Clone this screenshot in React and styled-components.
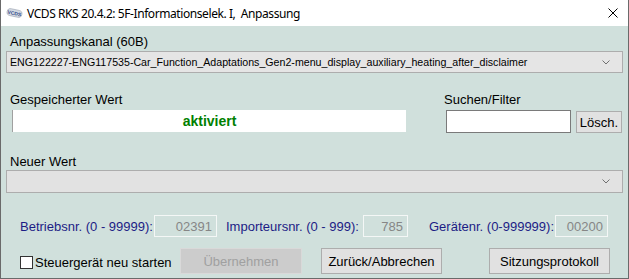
import React from "react";
import styled, { createGlobalStyle } from "styled-components";

const GlobalStyle = createGlobalStyle`
  html, body {
    margin: 0;
    padding: 0;
    background: #ffffff;
  }
  body {
    font-family: "Liberation Sans", Arial, sans-serif;
  }
`;

const Window = styled.div`
  width: 629px;
  height: 279px;
  box-sizing: border-box;
  border: 1px solid #6a6a6a;
  border-top: none;
  display: flex;
  flex-direction: column;
  overflow: hidden;
`;

const TitleBar = styled.div`
  height: 26px;
  flex: none;
  background: #ffffff;
  display: flex;
  align-items: center;
  padding: 0 10px 0 5px;
`;

const Title = styled.div`
  margin-left: 4px;
  font-family: "Noto Sans", "Open Sans", sans-serif;
  font-size: 12px;
  letter-spacing: -0.42px;
  color: #000000;
  white-space: pre;
`;

const CloseButton = styled.div`
  margin-left: auto;
  width: 10px;
  height: 10px;
  display: flex;
`;

const Body = styled.div`
  flex: 1;
  background: #d0e0dc;
  padding: 8px 5px 0;
  display: flex;
  flex-direction: column;
`;

const Label = styled.div`
  font-size: 13px;
  line-height: 15px;
  color: #000000;
  padding-left: ${(p) => p.$indent ?? 4}px;
`;

const Combo = styled.div`
  height: ${(p) => p.$height}px;
  margin-top: ${(p) => p.$gap}px;
  box-sizing: border-box;
  border: 1px solid #adadad;
  background: ${(p) => (p.$disabled ? "#e2e2e2" : "#e5e5e5")};
  display: flex;
  align-items: center;
  padding: 0 12px 0 3px;
  font-size: 10.65px;
  color: #000000;
  white-space: nowrap;
  overflow: hidden;

  svg {
    margin-left: auto;
    flex: none;
  }
`;

const ValueRow = styled.div`
  display: flex;
  margin-top: 19px;
`;

const LeftColumn = styled.div`
  width: 438px;
  display: flex;
  flex-direction: column;
`;

const RightColumn = styled.div`
  display: flex;
  flex-direction: column;
`;

const StoredValue = styled.div`
  margin: 3px 0 0 6px;
  width: 394px;
  height: 22px;
  box-sizing: border-box;
  background: #ffffff;
  border-left: 1px solid #a0a0a0;
  display: flex;
  align-items: center;
  justify-content: center;
  font-size: 14px;
  font-weight: bold;
  color: #008000;
`;

const SearchRow = styled.div`
  display: flex;
  align-items: flex-start;
  margin: 3px 0 0 2px;
  gap: 5px;
`;

const SearchInput = styled.div`
  width: 125px;
  height: 23px;
  box-sizing: border-box;
  background: #ffffff;
  border: 1px solid #7a7a7a;
`;

const Button = styled.div`
  width: ${(p) => p.$width}px;
  height: ${(p) => p.$height}px;
  margin-top: ${(p) => p.$top ?? 0}px;
  box-sizing: border-box;
  border: 1px solid ${(p) => (p.$disabled ? "#d9d9d9" : "#adadad")};
  background: ${(p) => (p.$disabled ? "#cccccc" : "#e1e1e1")};
  color: ${(p) => (p.$disabled ? "#a0a0a0" : "#000000")};
  font-size: 13px;
  display: flex;
  align-items: center;
  justify-content: center;
  flex: none;
`;

const NewValue = styled.div`
  margin-top: 21px;
  display: flex;
  flex-direction: column;
`;

const InfoRow = styled.div`
  margin-top: 22px;
  height: 22px;
  display: flex;
  align-items: center;
  padding-left: 14px;
`;

const Field = styled.div`
  width: ${(p) => p.$width}px;
  margin-left: ${(p) => p.$gap ?? 0}px;
  display: flex;
  align-items: center;
  justify-content: space-between;
  font-size: 13px;
  color: #1c1c85;
  white-space: nowrap;
`;

const NumberBox = styled.div`
  width: ${(p) => p.$width}px;
  height: 22px;
  box-sizing: border-box;
  border: 1px solid #f4f7f6;
  display: flex;
  align-items: center;
  justify-content: flex-end;
  padding-right: 4px;
  color: #868686;
  font-size: 13px;
`;

const ActionRow = styled.div`
  margin-top: 11px;
  height: 26px;
  display: flex;
  align-items: center;
  padding-left: 14px;
`;

const CheckField = styled.label`
  width: 160px;
  display: flex;
  align-items: center;
  gap: 2px;
  font-size: 13px;
  color: #000000;
  white-space: nowrap;
  margin-top: 2px;
`;

const CheckBox = styled.span`
  width: 13px;
  height: 13px;
  box-sizing: border-box;
  border: 1px solid #333333;
  background: #ffffff;
  flex: none;
`;

const Spacer = styled.div`
  width: ${(p) => p.$width}px;
  flex: none;
`;

const Chevron = () => (
  <svg width="8" height="5" viewBox="0 0 8 5">
    <polyline points="0.5,0.5 4,4 7.5,0.5" fill="none" stroke="#707070" strokeWidth="1" />
  </svg>
);

const AppIcon = () => (
  <svg width="17" height="12" viewBox="0 0 17 12">
    <g transform="rotate(12 8.5 6)">
      <rect x="1" y="2.5" width="15" height="7" rx="3.5" fill="#d6dbe3" stroke="#9aa3b2" strokeWidth="0.6" />
      <text x="8.5" y="8" fontSize="5" fontWeight="bold" fill="#2f4a8a" textAnchor="middle" fontFamily="Liberation Sans, sans-serif">
        VCDS
      </text>
    </g>
  </svg>
);

const App = () => {
  return (
    <>
      <GlobalStyle />
      <Window>
        <TitleBar>
          <AppIcon />
          <Title>VCDS RKS 20.4.2: 5F-Informationselek. I,  Anpassung</Title>
          <CloseButton>
            <svg width="10" height="10" viewBox="0 0 10 10">
              <path d="M0.5 0.5 L9.5 9.5 M9.5 0.5 L0.5 9.5" stroke="#000" strokeWidth="1" />
            </svg>
          </CloseButton>
        </TitleBar>
        <Body>
          <Label>Anpassungskanal (60B)</Label>
          <Combo $height={22} $gap={2}>
            ENG122227-ENG117535-Car_Function_Adaptations_Gen2-menu_display_auxiliary_heating_after_disclaimer
            <Chevron />
          </Combo>

          <ValueRow>
            <LeftColumn>
              <Label>Gespeicherter Wert</Label>
              <StoredValue>aktiviert</StoredValue>
            </LeftColumn>
            <RightColumn>
              <Label $indent={0}>Suchen/Filter</Label>
              <SearchRow>
                <SearchInput />
                <Button $width={46} $height={22} $top={1}>
                  Lösch.
                </Button>
              </SearchRow>
            </RightColumn>
          </ValueRow>

          <NewValue>
            <Label>Neuer Wert</Label>
            <Combo $height={23} $gap={1} $disabled>
              <Chevron />
            </Combo>
          </NewValue>

          <InfoRow>
            <Field $width={197}>
              Betriebsnr. (0 - 99999):
              <NumberBox $width={63}>02391</NumberBox>
            </Field>
            <Field $width={182} $gap={9}>
              Importeursnr. (0 - 999):
              <NumberBox $width={45}>785</NumberBox>
            </Field>
            <Field $width={179} $gap={21}>
              Gerätenr. (0-999999):
              <NumberBox $width={53}>00200</NumberBox>
            </Field>
          </InfoRow>

          <ActionRow>
            <CheckField>
              <CheckBox />
              Steuergerät neu starten
            </CheckField>
            <Button $width={122} $height={26} $disabled>
              Übernehmen
            </Button>
            <Spacer $width={19} />
            <Button $width={121} $height={26}>
              Zurück/Abbrechen
            </Button>
            <Spacer $width={47} />
            <Button $width={121} $height={26}>
              Sitzungsprotokoll
            </Button>
          </ActionRow>
        </Body>
      </Window>
    </>
  );
};

export default App;
